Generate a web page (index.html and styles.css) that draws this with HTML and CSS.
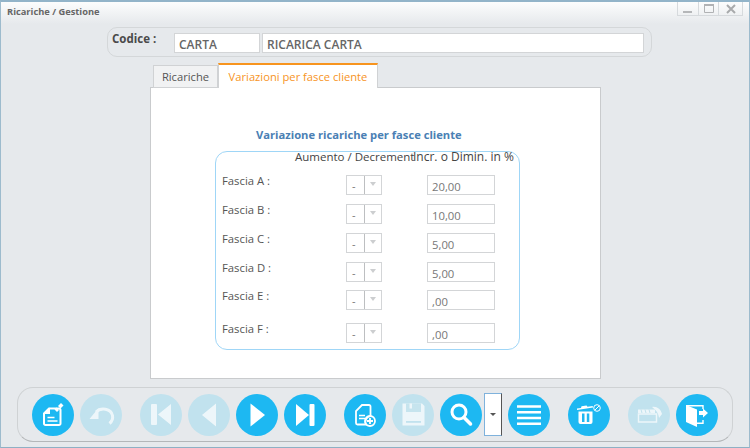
FILE: index.html
```html
<!DOCTYPE html>
<html lang="it">
<head>
<meta charset="utf-8">
<title>Ricariche / Gestione</title>
<link rel="stylesheet" href="styles.css">
</head>
<body>
<div class="window">
  <header class="titlebar">
    <span class="title">Ricariche / Gestione</span>
    <div class="winctl">
      <span class="wbtn"><svg width="10" height="10" viewBox="0 0 10 10"><rect x="0" y="7" width="9" height="2" fill="#b5b7b9"/></svg></span>
      <span class="wbtn"><svg width="10" height="10" viewBox="0 0 10 10"><path d="M.5 1.500h9v7h-9z" fill="none" stroke="#b0b2b4"/><rect y="0" width="10" height="2" fill="#b0b2b4"/></svg></span>
      <span class="wbtn wide"><svg width="10" height="10" viewBox="0 0 10 10"><path d="M1 1l8 8M9 1L1 9" stroke="#a8aaac" stroke-width="2"/></svg></span>
    </div>
  </header>

  <section class="codebar">
    <label class="codelabel">Codice :</label>
    <div class="codefield short">CARTA</div>
    <div class="codefield long">RICARICA CARTA</div>
  </section>

  <nav class="tabs">
    <span class="tab">Ricariche</span>
    <span class="tab active">Variazioni per fasce cliente</span>
  </nav>

  <main class="panel">
    <h2 class="heading">Variazione ricariche per fasce cliente</h2>
    <div class="group">
      <div class="heads"><span class="head-a">Aumento / Decrement</span><span class="head-b">Incr. o Dimin. in %</span></div>
      <div class="row r1"><span class="lbl">Fascia A :</span><span class="combo"><span class="cval">-</span><span class="carrow"></span></span><span class="num">20,00</span></div>
      <div class="row r2"><span class="lbl">Fascia B :</span><span class="combo"><span class="cval">-</span><span class="carrow"></span></span><span class="num">10,00</span></div>
      <div class="row r3"><span class="lbl">Fascia C :</span><span class="combo"><span class="cval">-</span><span class="carrow"></span></span><span class="num">5,00</span></div>
      <div class="row r4"><span class="lbl">Fascia D :</span><span class="combo"><span class="cval">-</span><span class="carrow"></span></span><span class="num">5,00</span></div>
      <div class="row r5"><span class="lbl">Fascia E :</span><span class="combo"><span class="cval">-</span><span class="carrow"></span></span><span class="num">,00</span></div>
      <div class="row r6"><span class="lbl">Fascia F :</span><span class="combo"><span class="cval">-</span><span class="carrow"></span></span><span class="num">,00</span></div>
    </div>
  </main>

  <footer class="toolbar">
    <span class="rb"><svg viewBox="0 0 42 42"><path d="M17 14.500h10a1.500 1.500 0 0 1 1.500 1.500v13.500a1.500 1.500 0 0 1-1.500 1.500H13.500a1.500 1.500 0 0 1-1.500-1.500V19.500z" fill="none" stroke="#fff" stroke-width="2"/><path d="M11.500 20H18v-6.500z" fill="#fff"/><path d="M15.500 23.500h7M15.500 27h10" stroke="#fff" stroke-width="1.500"/><path d="M22.500 15.500l2.500 2.500 2-2-2.500-2.500z" fill="#fff"/><path d="M26 12l2.500 2.500 3-3L29 9z" fill="#fff"/></svg></span>
    <span class="rb off gap-s"><svg viewBox="0 0 42 42"><path d="M16 18c5-5 15-3.500 16.500 3.500.6 3-.6 6-3 8" fill="none" stroke="#fff" stroke-width="3"/><path d="M18.500 14v11H9.500z" fill="#fff"/></svg></span>
    <span class="rb off gap-l"><svg viewBox="0 0 42 42"><rect x="11" y="10" width="6" height="21" rx="1" fill="#fff"/><path d="M31 10v21L18 20.500z" fill="#fff"/></svg></span>
    <span class="rb off gap-s"><svg viewBox="0 0 42 42"><path d="M28 9.500v23L14 21z" fill="#fff"/></svg></span>
    <span class="rb gap-s"><svg viewBox="0 0 42 42"><path d="M14.500 9.500v23L29 21z" fill="#fff"/></svg></span>
    <span class="rb gap-s"><svg viewBox="0 0 42 42"><path d="M12 10v22l13-11z" fill="#fff"/><rect x="25.500" y="10" width="5" height="22" rx="1" fill="#fff"/></svg></span>
    <span class="rb gap-l"><svg viewBox="0 0 42 42"><path d="M18 11h7a1.500 1.500 0 0 1 1.500 1.500V22a6 6 0 0 0-4.500 8.500h-8.500A1.500 1.500 0 0 1 12 29V17z" fill="none" stroke="#fff" stroke-width="1.800"/><path d="M15 21.500h6M15 24.500h6" stroke="#fff" stroke-width="1.400"/><circle cx="26" cy="27" r="5" fill="none" stroke="#fff" stroke-width="1.800"/><path d="M23 27h6M26 24v6" stroke="#fff" stroke-width="1.800"/></svg></span>
    <span class="rb off gap-s"><svg viewBox="0 0 42 42"><path d="M10.500 9.500H30L32.500 12v19.500h-22z" fill="#fff"/><path d="M14 9.500h15v8.500H14z" fill="#c9e5ef"/><rect x="17.500" y="9.500" width="2.500" height="5" fill="#fff"/><rect x="14" y="27" width="15" height="1.800" fill="#c1e2ee"/></svg></span>
    <span class="rb gap-s"><svg viewBox="0 0 42 42"><circle cx="19" cy="18" r="7" fill="none" stroke="#fff" stroke-width="3"/><path d="M24 23.500l6.500 6.500" stroke="#fff" stroke-width="3.500" stroke-linecap="round"/></svg></span>
    <span class="dropbtn"><span class="droparrow"></span></span>
    <span class="rb gap-xs"><svg viewBox="0 0 42 42"><path d="M9 12.500h24M9 18.300h24M9 24h24M9 29.800h24" stroke="#fff" stroke-width="2.600"/></svg></span>
    <span class="rb gap-l"><svg viewBox="0 0 42 42"><path d="M9 16l16-2.500-.3-1.500-5.200.8-1-1.300-5 .8-.5 1.600L9 14.500z" fill="#fff"/><path d="M10.500 17.500h14V28a2 2 0 0 1-2 2h-10a2 2 0 0 1-2-2z" fill="#fff"/><rect x="14" y="19.500" width="2.500" height="8.500" fill="#1db8f2"/><rect x="18.800" y="19.500" width="2.500" height="8.500" fill="#1db8f2"/><circle cx="29" cy="14" r="3.300" fill="none" stroke="#fff"/><path d="M27 16l4-4" stroke="#fff"/></svg></span>
    <span class="rb off gap-l"><svg viewBox="0 0 42 42"><path d="M10.500 20h18v8h-18z" fill="none" stroke="#fff" stroke-width="1.500"/><path d="M10 15.500h17v3.500H10z" fill="#fff"/><path d="M13 15.500l1 3.500M17 15.500l1 3.500M21 15.500l1 3.500" stroke="#c1e2ee"/><path d="M24 13c4.500-1 9 2 10 7l-3 4c-.5-5-3-8-7-11z" fill="#fff"/></svg></span>
    <span class="rb gap-xs"><svg viewBox="0 0 42 42"><path d="M10 11l11 4.500V33l-11-5z" fill="#fff"/><path d="M10 11.800h17V15M21 29.200h6V26" fill="none" stroke="#fff" stroke-width="1.400"/><path d="M23 17h4v-2.500l5 4.500-5 4.500V21h-4z" fill="#fff"/></svg></span>
  </footer>
</div>
</body>
</html>
```

FILE: styles.css
```css
* { box-sizing: border-box; }
html, body { margin: 0; padding: 0; }
body { font-family: "Open Sans", "Noto Sans", sans-serif; color: #444; }
.window {
  width: 750px; height: 448px; background: #e6e9ec;
  border: 1px solid #9dbbcd; border-top: 2px solid #92b4c9;
  border-bottom-color: #8fb0c4; overflow: hidden;
}
.titlebar {
  height: 22px; display: flex; justify-content: space-between; align-items: flex-start;
  background: linear-gradient(#fcfdfd, #e6e9ec);
}
.title { margin: 3px 0 0 6px; font-size: 9.300px; font-weight: 700; color: #666; line-height: 13px; }
.winctl { display: flex; margin-right: 6px; height: 14px; border: 1px solid #d6dadd; border-top: 0; }
.wbtn { width: 20px; display: flex; align-items: center; justify-content: center; border-left: 1px solid #d6dadd; }
.wbtn:first-child { border-left: 0; }
.wbtn.wide { width: 24px; }
.codebar {
  margin: 3px 0 0 106px; width: 545px; height: 30px; border: 1px solid #d4d7d9; border-radius: 10px;
  display: flex; align-items: flex-start; padding: 5px 0 0 4px;
}
.codelabel { font-size: 11.500px; font-weight: 700; color: #4a4a4a; width: 62px; line-height: 16px; margin-top: -2px; }
.codefield {
  height: 20px; background: #fff; border: 1px solid #d3d5d7; font-size: 12px; font-weight: 600;
  color: #666; line-height: 21px; padding-left: 4px;
}
.short { width: 86px; margin-right: 2px; }
.long { width: 382px; }
.tabs { margin: 6px 0 0 152px; height: 25px; display: flex; align-items: flex-end; position: relative; z-index: 1; }
.tab {
  height: 23px; width: 65px; text-align: center; font-size: 11.200px; line-height: 22px; color: #555;
  background: #f1f2f3; border: 1px solid #d0d2d4;
}
.tab.active {
  width: 160px; height: 25px; background: #fff; color: #f7941e; line-height: 24px;
  border-top: 2px solid #f7941e; border-bottom: 0; border-left: 1px solid #d0d2d4;
}
.panel {
  margin: -1px 0 0 149px; width: 451px; height: 292px; background: #fff; border: 1px solid #c9cbcd;
  padding: 38px 0 0 64px;
}
.heading { margin: 0 0 0 41px; font-size: 11.200px; font-weight: 700; color: #4a80b4; line-height: 17px; }
.group {
  margin-top: 8px; width: 305px; height: 199px; border: 1px solid #9fd6f7; border-radius: 12px; position: relative;
}
.heads { height: 0; font-size: 12px; line-height: 15px; color: #444; display: flex; }
.head-a { margin-left: 79px; margin-top: -3px; width: 118px; flex: none; white-space: nowrap; font-size: 11.500px; height: 16px; }
.head-b { margin-top: -3px; white-space: nowrap; }
.row { display: flex; align-items: flex-start; padding-left: 6px; height: 20px; }
.r1 { margin-top: 23px; }
.r2, .r3, .r4 { margin-top: 9px; }
.r5 { margin-top: 8px; }
.r6 { margin-top: 13px; }
.lbl { width: 124px; font-size: 11.300px; color: #555; line-height: 14px; margin-top: -1px; }
.combo { width: 36px; height: 20px; display: flex; border: 1px solid #d3d5d7; }
.cval { width: 17px; font-size: 11px; color: #777; padding-left: 5px; line-height: 20px; }
.carrow { flex: 1; border-left: 1px solid #bdbfc1; position: relative; }
.carrow::after {
  content: ""; position: absolute; left: 5px; top: 6px; border: 3px solid transparent;
  border-top: 4px solid #ccced0; border-bottom: 0;
}
.num {
  margin-left: 45px; width: 68px; height: 20px; border: 1px solid #d3d5d7; font-size: 11.300px;
  color: #777; line-height: 22px; padding-left: 4px;
}
.toolbar {
  margin: 8px 0 0 16px; width: 716px; height: 55px; border: 1px solid #cfd2d4; border-bottom: 1px solid #b4b7b9;
  border-radius: 16px; display: flex; align-items: flex-start; padding: 6px 0 0 14px;
}
.rb { width: 42px; height: 42px; border-radius: 50%; background: #1db8f2; flex: none; }
.rb svg { display: block; width: 42px; height: 42px; }
.rb.off { background: #c1e2ee; }
.rb.off svg { opacity: .72; }
.gap-xs { margin-left: 6px; }
.gap-s { margin-left: 6px; }
.gap-l { margin-left: 18px; }
.dropbtn {
  margin: -1px 0 0 2px; width: 18px; height: 43px; background: #fff; border: 1px solid #7fb2dc; border-right-color: #555;
  display: flex; align-items: center; justify-content: center; flex: none;
}
.droparrow { border: 3px solid transparent; border-top: 3px solid #555; border-bottom: 0; }
```
